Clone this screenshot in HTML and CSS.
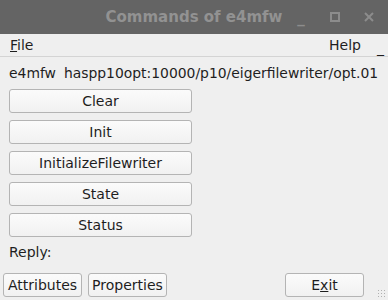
FILE: index.html
```html
<!DOCTYPE html>
<html>
<head>
<meta charset="utf-8">
<link rel="stylesheet" href="styles.css">
</head>
<body>
<div class="window">
  <div class="titlebar">
    <span class="title">Commands of e4mfw</span>
    <div class="controls">
      <span class="ctl min">_</span>
      <span class="ctl max"><span class="sq"></span></span>
      <span class="ctl close">
        <svg width="10" height="10" viewBox="0 0 10 10"><path d="M1 1L9 9M9 1L1 9" stroke="#8c8c8c" stroke-width="2"/></svg>
      </span>
    </div>
  </div>
  <div class="menubar">
    <span class="menu"><u>F</u>ile</span>
    <span class="spacer"></span>
    <span class="menu">Help</span>
    <span class="menu-ext">_</span>
  </div>
  <div class="content">
    <div class="devline"><span class="devname">e4mfw</span><span>haspp10opt:10000/p10/eigerfilewriter/opt.01</span></div>
    <div class="cmds">
      <button class="btn">Clear</button>
      <button class="btn">Init</button>
      <button class="btn">InitializeFilewriter</button>
      <button class="btn">State</button>
      <button class="btn">Status</button>
    </div>
    <div class="reply">Reply:</div>
  </div>
  <div class="footer">
    <button class="btn small">Attributes</button>
    <button class="btn small">Properties</button>
    <span class="spacer"></span>
    <button class="btn small exit">E<u>x</u>it</button>
    <span class="grip"></span>
  </div>
</div>
</body>
</html>
```
FILE: styles.css
```css
html, body {
  margin: 0;
  padding: 0;
}
body {
  width: 388px;
  height: 300px;
  overflow: hidden;
  background: #efefef;
  font-family: "DejaVu Sans", sans-serif;
  font-size: 14px;
  color: #1e1e1e;
}
.window {
  display: flex;
  flex-direction: column;
  height: 300px;
}
.titlebar {
  height: 34px;
  background: #646464;
  position: relative;
  display: flex;
  align-items: center;
  justify-content: center;
}
.title {
  font-weight: bold;
  font-size: 15px;
  color: #929292;
  margin-left: 0;
}
.controls {
  position: absolute;
  right: 0;
  top: 0;
  height: 34px;
  display: flex;
  align-items: center;
}
.ctl {
  width: 34px;
  display: flex;
  justify-content: center;
  align-items: center;
  color: #8c8c8c;
  font-weight: bold;
}
.ctl.min {
  font-size: 15px;
  margin-top: 2px;
}
.sq {
  width: 6px;
  height: 6px;
  border: 2px solid #8c8c8c;
}
.ctl.close {
  margin-right: 2px;
}
.menubar {
  height: 22px;
  display: flex;
  align-items: center;
  padding: 0 10px;
  border-bottom: 1px solid #d4d4d4;
  font-size: 14px;
}
.spacer {
  flex: 1;
}
.menu-ext {
  margin-left: 16px;
  margin-right: -6px;
  margin-top: 6px;
}
.content {
  padding: 8px 9px 0 9px;
  display: flex;
  flex-direction: column;
}
.devline {
  display: flex;
  gap: 8px;
  height: 16px;
  align-items: center;
  font-size: 13.9px;
}
.cmds {
  margin-top: 8px;
  display: flex;
  flex-direction: column;
  gap: 7px;
  width: 183px;
}
.btn {
  font-family: "DejaVu Sans", sans-serif;
  font-size: 14px;
  color: #1e1e1e;
  height: 24px;
  border: 1px solid #b4b4b4;
  border-radius: 3px;
  background: linear-gradient(#fbfbfb, #f1f1f1);
  padding: 0;
}
.reply {
  margin-top: 7px;
  font-size: 14px;
}
.footer {
  margin-top: auto;
  padding: 0 3px 3px 3px;
  display: flex;
  gap: 6px;
  align-items: center;
  position: relative;
}
.btn.small {
  width: 79px;
}
.btn.exit {
  margin-right: 21px;
}
.grip {
  position: absolute;
  right: 2px;
  bottom: 2px;
  width: 9px;
  height: 9px;
  background-image: radial-gradient(#b0b0b0 0.7px, transparent 0.8px);
  background-size: 3px 3px;
}
```
